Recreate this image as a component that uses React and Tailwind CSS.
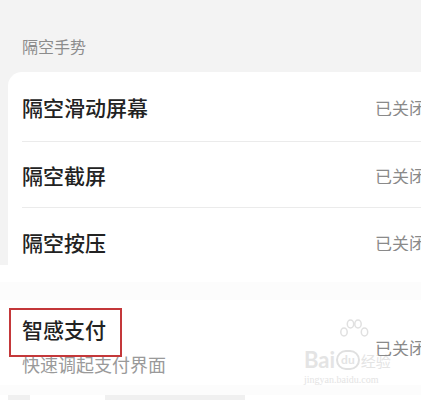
import React from 'react';

const font = { fontFamily: '"Noto Sans CJK SC", "Noto Sans", sans-serif' };

const rows = [
  { name: '隔空滑动屏幕', h: 'h-[70px]', pt: 'pt-[25px]' },
  { name: '隔空截屏', h: 'h-[66px]', pt: 'pt-[23px]' },
  { name: '隔空按压', h: 'flex-1', pt: 'pt-[24px]' },
];

const App = () => {
  return (
    <div className="w-[421px] h-[400px] overflow-hidden bg-white" style={font}>
      {/* upper section */}
      <div className="h-[265px] bg-[#f3f3f3] flex flex-col">
        <div className="h-[72px] flex items-end pb-[18px] pl-[22px]">
          <span className="text-[16px] leading-none text-[#8c8c8c]">隔空手势</span>
        </div>
        <div className="flex-1 ml-[8px] bg-white rounded-tl-[14px] flex flex-col">
          {rows.map((r, i) => (
            <div key={r.name} className={`${r.h} flex flex-col`}>
              <div className={`flex-1 flex items-start justify-between pl-[14px] ${r.pt}`}>
                <span className="text-[21px] leading-none font-medium text-[#222222]">{r.name}</span>
                <span className="text-[17px] leading-none text-[#8a8a8a] w-[46px] whitespace-nowrap overflow-hidden mt-[2px]">已关闭</span>
              </div>
              {i < rows.length - 1 && <div className="ml-[14px] h-px bg-[#ebebeb]" />}
            </div>
          ))}
        </div>
      </div>

      {/* lower section */}
      <div className="h-[135px] relative flex flex-col">
        <div className="h-[17px] bg-white" />
        <div className="h-[18px] bg-[#fcfcfc]" />
        <div className="flex-1 flex items-start justify-between pt-[19px] pl-[22px]">
          <div className="relative flex flex-col">
            <span className="text-[21px] leading-none font-medium text-[#222222]">智感支付</span>
            <span className="text-[18px] leading-none text-[#9a9a9a] mt-[15px]">快速调起支付界面</span>
            <div className="absolute left-[-13px] top-[-11px] w-[113px] h-[49px] border-2 border-[#c4383a]" />
          </div>
          <span className="relative z-10 text-[17px] leading-none text-[#8a8a8a] w-[46px] whitespace-nowrap overflow-hidden mt-[20px]">已关闭</span>
        </div>
        {/* watermark */}
        <div className="absolute left-[304px] top-[53px] w-[92px] flex flex-col items-start text-[#e4e4e4]">
          <svg width="30" height="28" viewBox="0 0 30 28" fill="none" stroke="#e0e0e0" strokeWidth="1.5" className="ml-[35px]">
            <ellipse cx="5" cy="14" rx="3.2" ry="4" />
            <ellipse cx="11.5" cy="6" rx="3.2" ry="4" />
            <ellipse cx="19" cy="6" rx="3.2" ry="4" />
            <ellipse cx="25.5" cy="14" rx="3.2" ry="4" />
          </svg>
          <div className="flex items-center leading-none mt-[3px] whitespace-nowrap">
            <span className="text-[22px] font-bold" style={{ fontFamily: 'Lato, sans-serif' }}>Bai</span>
            <span className="text-[12px] font-bold mx-[1px] px-[3px] py-[2px] rounded-full border-2 border-[#e0e0e0]" style={{ fontFamily: 'Lato, sans-serif' }}>du</span>
            <span className="text-[15px]">经验</span>
          </div>
          <span className="text-[10px] mt-[4px] leading-none whitespace-nowrap" style={{ fontFamily: '"Liberation Serif", serif' }}>jingyan.baidu.com</span>
        </div>
        <div className="h-[10px] bg-[#fcfcfc]" />
        <div className="h-[5px] flex">
          <div className="ml-[8px] w-[22px] bg-[#f0f0f0]" />
          <div className="ml-[75px] w-[140px] bg-[#f0f0f0]" />
        </div>
      </div>
    </div>
  );
};

export default App;
